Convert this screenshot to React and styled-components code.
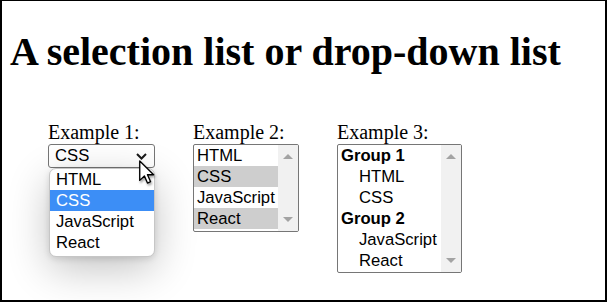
import styled, { createGlobalStyle } from "styled-components"

const GlobalStyle = createGlobalStyle`
  html, body {
    margin: 0;
    padding: 0;
    background: #fff;
  }
  body {
    font-family: "Liberation Serif", serif;
    color: #000;
  }
`

const Frame = styled.div`
  width: 607px;
  height: 302px;
  box-sizing: border-box;
  border: 2px solid #000;
  border-top-width: 1px;
  padding-left: 8px;
  overflow: hidden;
  background: #fff;
`

const Title = styled.h1`
  margin: 28px 0 0;
  font: 700 40px/46px "Liberation Serif", serif;
  white-space: nowrap;
`

const Row = styled.div`
  display: flex;
  align-items: flex-start;
  gap: 38px;
  margin: 46px 0 0 38px;
`

const Column = styled.div`
  position: relative;
  width: ${(p) => p.$width}px;
  display: flex;
  flex-direction: column;
`

const Label = styled.div`
  font: 20px/23px "Liberation Serif", serif;
  white-space: nowrap;
`

const Select = styled.div`
  height: 24px;
  box-sizing: border-box;
  border: 1px solid #767676;
  border-radius: 3px;
  display: flex;
  align-items: center;
  justify-content: space-between;
  padding: 0 7px 0 6px;
  font: 16.67px "Liberation Sans", Arial, sans-serif;
`

const Popup = styled.ul`
  position: absolute;
  top: 47px;
  left: 1px;
  width: 106px;
  box-sizing: border-box;
  margin: 0;
  padding: 0 0 3px;
  list-style: none;
  background: #fff;
  border: 1px solid #c6c6c6;
  border-radius: 7px;
  overflow: hidden;
  box-shadow: 0 12px 42px rgba(0, 0, 0, 0.24), 0 2px 6px rgba(0, 0, 0, 0.12);
  font: 16.67px "Liberation Sans", Arial, sans-serif;
`

const PopupItem = styled.li`
  height: 21px;
  line-height: 21px;
  padding-left: 6px;
  background: ${(p) => (p.$active ? "#3c8ef6" : "transparent")};
  color: ${(p) => (p.$active ? "#fff" : "#000")};
`

const Cursor = styled.svg`
  position: absolute;
  left: 91px;
  top: 39px;
  filter: drop-shadow(1px 2px 1px rgba(0, 0, 0, 0.35));
`

const ListBox = styled.div`
  display: flex;
  height: ${(p) => p.$height}px;
  box-sizing: border-box;
  border: 1px solid #767676;
  border-radius: 2px;
  overflow: hidden;
  font: 16.67px "Liberation Sans", Arial, sans-serif;
`

const Options = styled.div`
  flex: 1;
  min-width: 0;
`

const Option = styled.div`
  height: 21px;
  line-height: 21px;
  white-space: nowrap;
  padding-left: ${(p) => (p.$indent ? 21 : 3)}px;
  font-weight: ${(p) => (p.$group ? 700 : 400)};
  background: ${(p) => (p.$selected ? "#cecece" : "transparent")};
`

const Scrollbar = styled.div`
  width: 20px;
  flex: none;
  background: #f1f1f1;
  display: flex;
  flex-direction: column;
  justify-content: space-between;
  align-items: center;
  padding: 9px 0;
  box-sizing: border-box;
`

const Arrow = styled.div`
  width: 0;
  height: 0;
  border-left: 5px solid transparent;
  border-right: 5px solid transparent;
  ${(p) =>
    p.$down
      ? "border-top: 5px solid #a3a3a3;"
      : "border-bottom: 5px solid #a3a3a3;"}
`

const Chevron = () => (
  <svg width="11" height="7" viewBox="0 0 11 7">
    <path d="M1 1 L5.5 5.5 L10 1" fill="none" stroke="#1a1a1a" strokeWidth="2" />
  </svg>
)

const example2 = [
  { text: "HTML" },
  { text: "CSS", selected: true },
  { text: "JavaScript" },
  { text: "React", selected: true },
]

const example3 = [
  { text: "Group 1", group: true },
  { text: "HTML", indent: true },
  { text: "CSS", indent: true },
  { text: "Group 2", group: true },
  { text: "JavaScript", indent: true },
  { text: "React", indent: true },
]

const App = () => {
  return (
    <Frame>
      <GlobalStyle />
      <Title>A selection list or drop-down list</Title>
      <Row>
        <Column $width={107}>
          <Label>Example 1:</Label>
          <Select>
            <span>CSS</span>
            <Chevron />
          </Select>
          <Popup>
            <PopupItem>HTML</PopupItem>
            <PopupItem $active>CSS</PopupItem>
            <PopupItem>JavaScript</PopupItem>
            <PopupItem>React</PopupItem>
          </Popup>
          <Cursor width="16" height="25" viewBox="0 0 13 20">
            <path
              d="M0.6 0.6 L0.6 16.4 L4.4 12.8 L6.9 18.6 L9.4 17.5 L6.9 11.8 L11.9 11.8 Z"
              fill="#fff"
              stroke="#000"
              strokeWidth="1.1"
              strokeLinejoin="round"
            />
          </Cursor>
        </Column>

        <Column $width={106}>
          <Label>Example 2:</Label>
          <ListBox $height={88}>
            <Options>
              {example2.map((o) => (
                <Option key={o.text} $selected={o.selected}>
                  {o.text}
                </Option>
              ))}
            </Options>
            <Scrollbar>
              <Arrow />
              <Arrow $down />
            </Scrollbar>
          </ListBox>
        </Column>

        <Column $width={125}>
          <Label>Example 3:</Label>
          <ListBox $height={129}>
            <Options>
              {example3.map((o) => (
                <Option key={o.text} $group={o.group} $indent={o.indent}>
                  {o.text}
                </Option>
              ))}
            </Options>
            <Scrollbar>
              <Arrow />
              <Arrow $down />
            </Scrollbar>
          </ListBox>
        </Column>
      </Row>
    </Frame>
  )
}

export default App
